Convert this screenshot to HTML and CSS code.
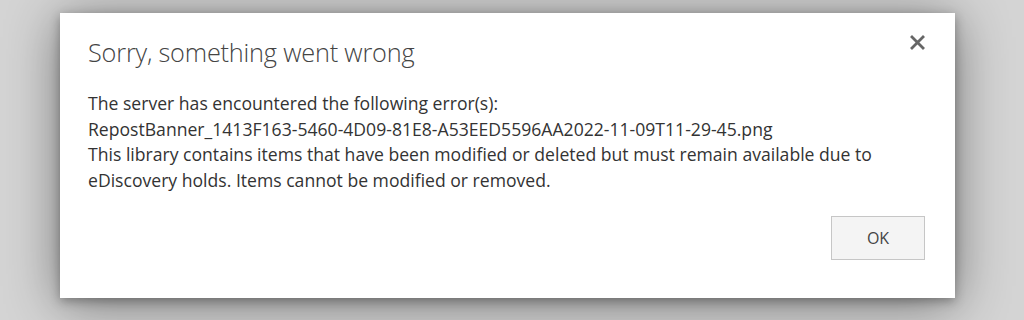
FILE: index.html
```html
<!DOCTYPE html>
<html>
<head>
<meta charset="utf-8">
<link rel="stylesheet" href="styles.css">
</head>
<body>
<div class="page">
  <div class="dialog">
    <div class="header">
      <h1 class="title">Sorry, something went wrong</h1>
      <button class="close" aria-label="Close">
        <svg width="15" height="15" viewBox="0 0 15 15"><path d="M2 2 L13 13 M13 2 L2 13" stroke="#666" stroke-width="2.8" stroke-linecap="square" fill="none"/></svg>
      </button>
    </div>
    <div class="message">
      <div>The server has encountered the following error(s):</div>
      <div>RepostBanner_1413F163-5460-4D09-81E8-A53EED5596AA2022-11-09T11-29-45.png</div>
      <div>This library contains items that have been modified or deleted but must remain available due to eDiscovery holds. Items cannot be modified or removed.</div>
    </div>
    <div class="footer">
      <button class="ok">OK</button>
    </div>
  </div>
</div>
</body>
</html>
```

FILE: styles.css
```css
html, body {
  margin: 0;
  padding: 0;
  background: #d4d4d4;
  height: 100%;
}
.page {
  padding: 13px 0 0 60px;
}
.dialog {
  width: 895px;
  height: 285px;
  box-sizing: border-box;
  background: #fff;
  box-shadow: 0 3px 10px rgba(0,0,0,0.3), 0 6px 50px rgba(0,0,0,0.45);
  padding: 22px 30px 0 28px;
  font-family: "Open Sans", "Noto Sans", sans-serif;
  color: #444;
  display: flex;
  flex-direction: column;
}
.header {
  display: flex;
  justify-content: space-between;
  align-items: flex-start;
}
.title {
  margin: 0;
  font-size: 25.3px;
  font-weight: 300;
  color: #444;
  line-height: 34px;
  letter-spacing: -0.2px;
}
.close {
  border: none;
  background: none;
  padding: 0;
  margin-top: 0;
  width: 15px;
  height: 15px;
  display: block;
}
.close svg { display: block; }
.message {
  margin-top: 22px;
  font-size: 17.6px;
  line-height: 25.5px;
  width: 800px;
  color: #333;
}
.footer {
  margin-top: auto;
  padding-bottom: 38px;
  display: flex;
  justify-content: flex-end;
}
.ok {
  width: 94px;
  height: 44px;
  background: #f4f4f4;
  border: 1px solid #c6c6c6;
  font-family: "Open Sans", "Noto Sans", sans-serif;
  font-size: 16px;
  color: #444;
  margin-right: 0;
}
```
